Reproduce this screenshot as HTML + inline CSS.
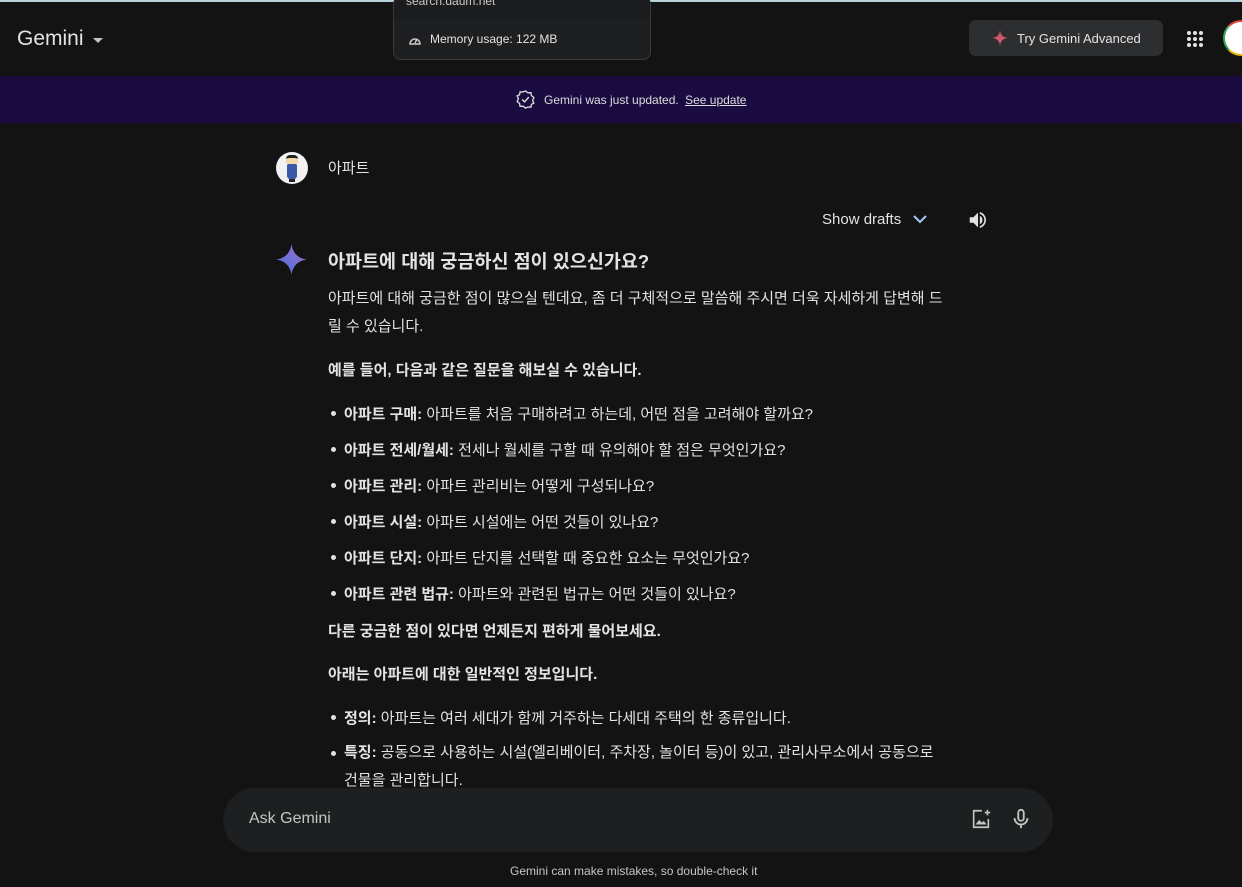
<!DOCTYPE html>
<html><head><meta charset="utf-8"><style>
*{margin:0;padding:0;box-sizing:border-box}
body{width:1242px;height:887px;background:#131314;color:#e3e3e3;font-family:"Liberation Sans","Noto Sans CJK KR",sans-serif;position:relative;overflow:hidden}
.a{position:absolute;white-space:nowrap}
.t{font-size:15px;color:#e3e3e3}
b{font-weight:700}
.li{position:absolute;left:344px;font-size:15px;white-space:nowrap}
.li:before{content:"";position:absolute;left:-13px;top:8px;width:5px;height:5px;border-radius:50%;background:#e3e3e3}
.li.two:before{top:12px}
</style></head><body>
<div class="a" style="left:0;top:0;width:1242px;height:2px;background:#b7d3dc"></div>
<div class="a" style="left:17px;top:27px;font-size:21px;color:#e3e3e3">Gemini</div>
<div class="a" style="left:93px;top:38px;width:0;height:0;border-left:5px solid transparent;border-right:5px solid transparent;border-top:5px solid #c4c7c5"></div>
<div class="a" style="left:393px;top:-4px;width:258px;height:64px;background:#1e1f20;border:1px solid #3a3b3c;border-radius:8px;overflow:hidden">
 <div style="height:23px;background:#1b1c1d;font-size:12px;color:#ccc;padding-left:12px;line-height:8px">search.daum.net</div>
 <svg style="position:absolute;left:14px;top:37px" width="14" height="12" viewBox="0 0 14 12"><path d="M2 10a5 5 0 1 1 10 0z" fill="none" stroke="#ccc" stroke-width="1.5"/><path d="M7 9l2-4" stroke="#ccc" stroke-width="1.5"/></svg>
 <div class="a" style="left:36px;top:35px;font-size:12px;color:#e3e3e3">Memory usage: 122 MB</div>
</div>
<div class="a" style="left:969px;top:20px;width:194px;height:36px;background:#2d2e30;border-radius:7px"></div>
<svg class="a" style="left:992px;top:30px" width="16" height="16" viewBox="0 0 16 16"><path d="M8 0C8.5 5 11 7.5 16 8 11 8.5 8.5 11 8 16 7.5 11 5 8.5 0 8 5 7.5 7.5 5 8 0z" fill="#d2546a"/></svg>
<div class="a" style="left:1017px;top:31px;font-size:13px;color:#e3e3e3">Try Gemini Advanced</div>
<svg class="a" style="left:1186px;top:30px" width="18" height="18" viewBox="0 0 18 18" fill="#e3e3e3"><circle cx="3" cy="3" r="2"/><circle cx="9" cy="3" r="2"/><circle cx="15" cy="3" r="2"/><circle cx="3" cy="9" r="2"/><circle cx="9" cy="9" r="2"/><circle cx="15" cy="9" r="2"/><circle cx="3" cy="15" r="2"/><circle cx="9" cy="15" r="2"/><circle cx="15" cy="15" r="2"/></svg>
<div class="a" style="left:1223px;top:20px;width:36px;height:36px;border-radius:50%;border:2px solid #e8b400;border-left-color:#34a853;border-top-color:#ea4335;background:#fff"></div>
<div class="a" style="left:0;top:76px;width:1242px;height:47px;background:#1a0b40"></div>
<svg class="a" style="left:516px;top:90px" width="19" height="19" viewBox="0 0 20 20"><path d="M10 1l2.5 2 3.2-.2.6 3.1 2.5 2-1.3 3 1.3 3-2.5 1.1-.6 3.1-3.2-.2L10 19l-2.5-2-3.2.2-.6-3.1-2.5-2 1.3-3-1.3-3 2.5-1.1.6-3.1 3.2.2z" fill="none" stroke="#ddd" stroke-width="1.4"/><path d="M6.5 10l2.5 2.5 4.5-5" fill="none" stroke="#ddd" stroke-width="1.5"/></svg>
<div class="a" style="left:544px;top:93px;font-size:12px;color:#ddd">Gemini was just updated. <span style="text-decoration:underline;margin-left:3px">See update</span></div>
<div class="a" style="left:276px;top:152px;width:32px;height:32px;border-radius:50%;background:#f2f2f2;overflow:hidden"><div style="position:absolute;left:11px;top:11px;width:10px;height:16px;background:#3b58a8;border-radius:3px"></div><div style="position:absolute;left:10px;top:3px;width:12px;height:9px;background:#f4d9a8;border-top:3px solid #222;border-radius:4px 4px 2px 2px"></div><div style="position:absolute;left:13px;top:27px;width:6px;height:3px;background:#222"></div></div>
<div class="a t" style="left:328px;top:157px">아파트</div>
<div class="a" style="left:822px;top:211px;font-size:15px;color:#e3e3e3">Show drafts</div>
<svg class="a" style="left:912px;top:213px" width="16" height="12" viewBox="0 0 16 12"><path d="M2 3l6 6 6-6" fill="none" stroke="#a8c7fa" stroke-width="2"/></svg>
<svg class="a" style="left:967px;top:209px" width="22" height="22" viewBox="0 0 24 24" fill="#e3e3e3"><path d="M3 9v6h4l5 5V4L7 9z"/><path d="M14 7.5a5 5 0 0 1 0 9z"/><path d="M14 3.3v2a7 7 0 0 1 0 13.4v2a9 9 0 0 0 0-17.4z"/></svg>
<svg class="a" style="left:276px;top:244px" width="31" height="31" viewBox="0 0 32 32"><defs><linearGradient id="g" x1="0" y1="1" x2="1" y2="0"><stop offset="0" stop-color="#4b6ee0"/><stop offset="1" stop-color="#9b72cb"/></linearGradient></defs><path d="M16 0C17 9 23 15 32 16 23 17 17 23 16 32 15 23 9 17 0 16 9 15 15 9 16 0z" fill="url(#g)"/></svg>
<div class="a" style="left:328px;top:248px;font-size:18.5px;font-weight:700;color:#e3e3e3">아파트에 대해 궁금하신 점이 있으신가요?</div>
<div class="a t" style="left:328px;top:285px;line-height:28px;white-space:normal;width:620px">아파트에 대해 궁금한 점이 많으실 텐데요, 좀 더 구체적으로 말씀해 주시면 더욱 자세하게 답변해 드릴 수 있습니다.</div>
<div class="a t" style="left:328px;top:359px"><b>예를 들어, 다음과 같은 질문을 해보실 수 있습니다.</b></div>
<div class="li" style="top:403px"><b>아파트 구매:</b> 아파트를 처음 구매하려고 하는데, 어떤 점을 고려해야 할까요?</div>
<div class="li" style="top:439px"><b>아파트 전세/월세:</b> 전세나 월세를 구할 때 유의해야 할 점은 무엇인가요?</div>
<div class="li" style="top:475px"><b>아파트 관리:</b> 아파트 관리비는 어떻게 구성되나요?</div>
<div class="li" style="top:511px"><b>아파트 시설:</b> 아파트 시설에는 어떤 것들이 있나요?</div>
<div class="li" style="top:547px"><b>아파트 단지:</b> 아파트 단지를 선택할 때 중요한 요소는 무엇인가요?</div>
<div class="li" style="top:583px"><b>아파트 관련 법규:</b> 아파트와 관련된 법규는 어떤 것들이 있나요?</div>
<div class="a t" style="left:328px;top:620px"><b>다른 궁금한 점이 있다면 언제든지 편하게 물어보세요.</b></div>
<div class="a t" style="left:328px;top:663px"><b>아래는 아파트에 대한 일반적인 정보입니다.</b></div>
<div class="li" style="top:707px"><b>정의:</b> 아파트는 여러 세대가 함께 거주하는 다세대 주택의 한 종류입니다.</div>
<div class="li two" style="top:739px;line-height:28px"><b>특징:</b> 공동으로 사용하는 시설(엘리베이터, 주차장, 놀이터 등)이 있고, 관리사무소에서 공동으로<br>건물을 관리합니다.</div>
<div class="a" style="left:0;top:788px;width:1242px;height:99px;background:#131314"></div>
<div class="a" style="left:223px;top:788px;width:830px;height:64px;background:#1e1f20;border-radius:32px"></div>
<div class="a" style="left:249px;top:810px;font-size:16px;color:#c4c7c5">Ask Gemini</div>
<svg class="a" style="left:970px;top:808px" width="22" height="22" viewBox="0 0 24 24" fill="none" stroke="#c4c7c5" stroke-width="1.8"><path d="M13 3H4v18h16v-9"/><path d="M19 2v6M16 5h6"/><path d="M6 18l4-5 3 3 2-2 3 4z" fill="#c4c7c5" stroke="none"/></svg>
<svg class="a" style="left:1011px;top:808px" width="20" height="22" viewBox="0 0 20 24" fill="none" stroke="#c4c7c5" stroke-width="2"><rect x="7" y="2" width="6" height="12" rx="3"/><path d="M3 11a7 7 0 0 0 14 0M10 18v4"/></svg>
<div class="a" style="left:510px;top:864px;font-size:12px;color:#c4c7c5">Gemini can make mistakes, so double-check it</div>
</body></html>
